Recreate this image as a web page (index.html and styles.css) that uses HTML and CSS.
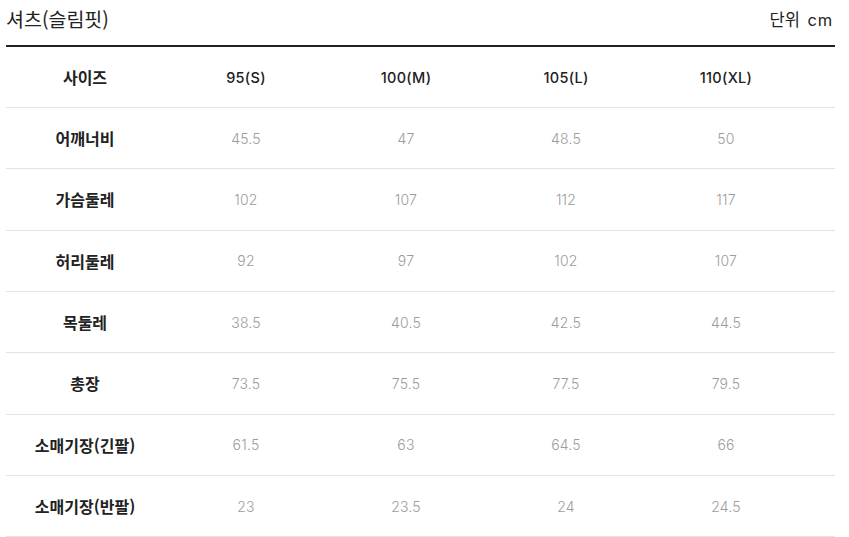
FILE: index.html
```html
<!DOCTYPE html>
<html lang="ko">
<head>
<meta charset="utf-8">
<title>사이즈</title>
<link rel="stylesheet" href="styles.css">
</head>
<body>
<div class="wrap">
  <div class="top">
    <h2 class="title">셔츠<span class="paren">(슬림핏)</span></h2>
    <div class="unit">단위 <span class="num">cm</span></div>
  </div>
  <div class="table">
    <div class="row head">
      <div class="lab">사이즈</div>
      <div class="hnum">95(S)</div>
      <div class="hnum">100(M)</div>
      <div class="hnum">105(L)</div>
      <div class="hnum">110(XL)</div>
    </div>
    <div class="row">
      <div class="lab">어깨너비</div>
      <div class="val">45.5</div><div class="val">47</div><div class="val">48.5</div><div class="val">50</div>
    </div>
    <div class="row">
      <div class="lab">가슴둘레</div>
      <div class="val">102</div><div class="val">107</div><div class="val">112</div><div class="val">117</div>
    </div>
    <div class="row">
      <div class="lab">허리둘레</div>
      <div class="val">92</div><div class="val">97</div><div class="val">102</div><div class="val">107</div>
    </div>
    <div class="row">
      <div class="lab">목둘레</div>
      <div class="val">38.5</div><div class="val">40.5</div><div class="val">42.5</div><div class="val">44.5</div>
    </div>
    <div class="row">
      <div class="lab">총장</div>
      <div class="val">73.5</div><div class="val">75.5</div><div class="val">77.5</div><div class="val">79.5</div>
    </div>
    <div class="row">
      <div class="lab">소매기장(긴팔)</div>
      <div class="val">61.5</div><div class="val">63</div><div class="val">64.5</div><div class="val">66</div>
    </div>
    <div class="row">
      <div class="lab">소매기장(반팔)</div>
      <div class="val">23</div><div class="val">23.5</div><div class="val">24</div><div class="val">24.5</div>
    </div>
  </div>
</div>
</body>
</html>
```
FILE: styles.css
```css
* { box-sizing: border-box; }
html, body { margin: 0; padding: 0; background: #fff; }
body {
  font-family: "Noto Sans CJK KR", "Noto Sans", sans-serif;
  color: #222;
}
.wrap {
  padding: 0 14px 0 6px;
}
.top {
  height: 45px;
  display: flex;
  justify-content: space-between;
  align-items: flex-start;
  padding-top: 6px;
}
.title {
  margin: 0;
  font-size: 19.5px;
  font-weight: 400;
  line-height: 26px;
  color: #222;
}
.unit {
  font-size: 16.5px;
  line-height: 26px;
  color: #222;
  padding-right: 2px;
}
.num {
  font-family: "Inter", "Noto Sans", sans-serif;
  font-size: 16.5px;
  letter-spacing: 0.8px;
  margin-left: 3px;
}
.table {
  border-top: 2px solid #222;
}
.row {
  display: grid;
  grid-template-columns: repeat(5, 160px);
  height: 61.33px;
  align-items: center;
  text-align: center;
  border-bottom: 1px solid #e3e3e3;
}
.head { height: 61px; }
.lab {
  font-size: 16px;
  font-weight: 700;
  color: #222;
  padding-right: 2px;
}
.hnum {
  font-family: "Inter", "Noto Sans", sans-serif;
  font-size: 14.5px;
  font-weight: 500;
  letter-spacing: 0.3px;
  color: #222;
}
.val {
  font-family: "Inter", "Noto Sans", sans-serif;
  font-size: 14px;
  font-weight: 300;
  letter-spacing: 0.2px;
  color: #9c9c9c;
}
```
